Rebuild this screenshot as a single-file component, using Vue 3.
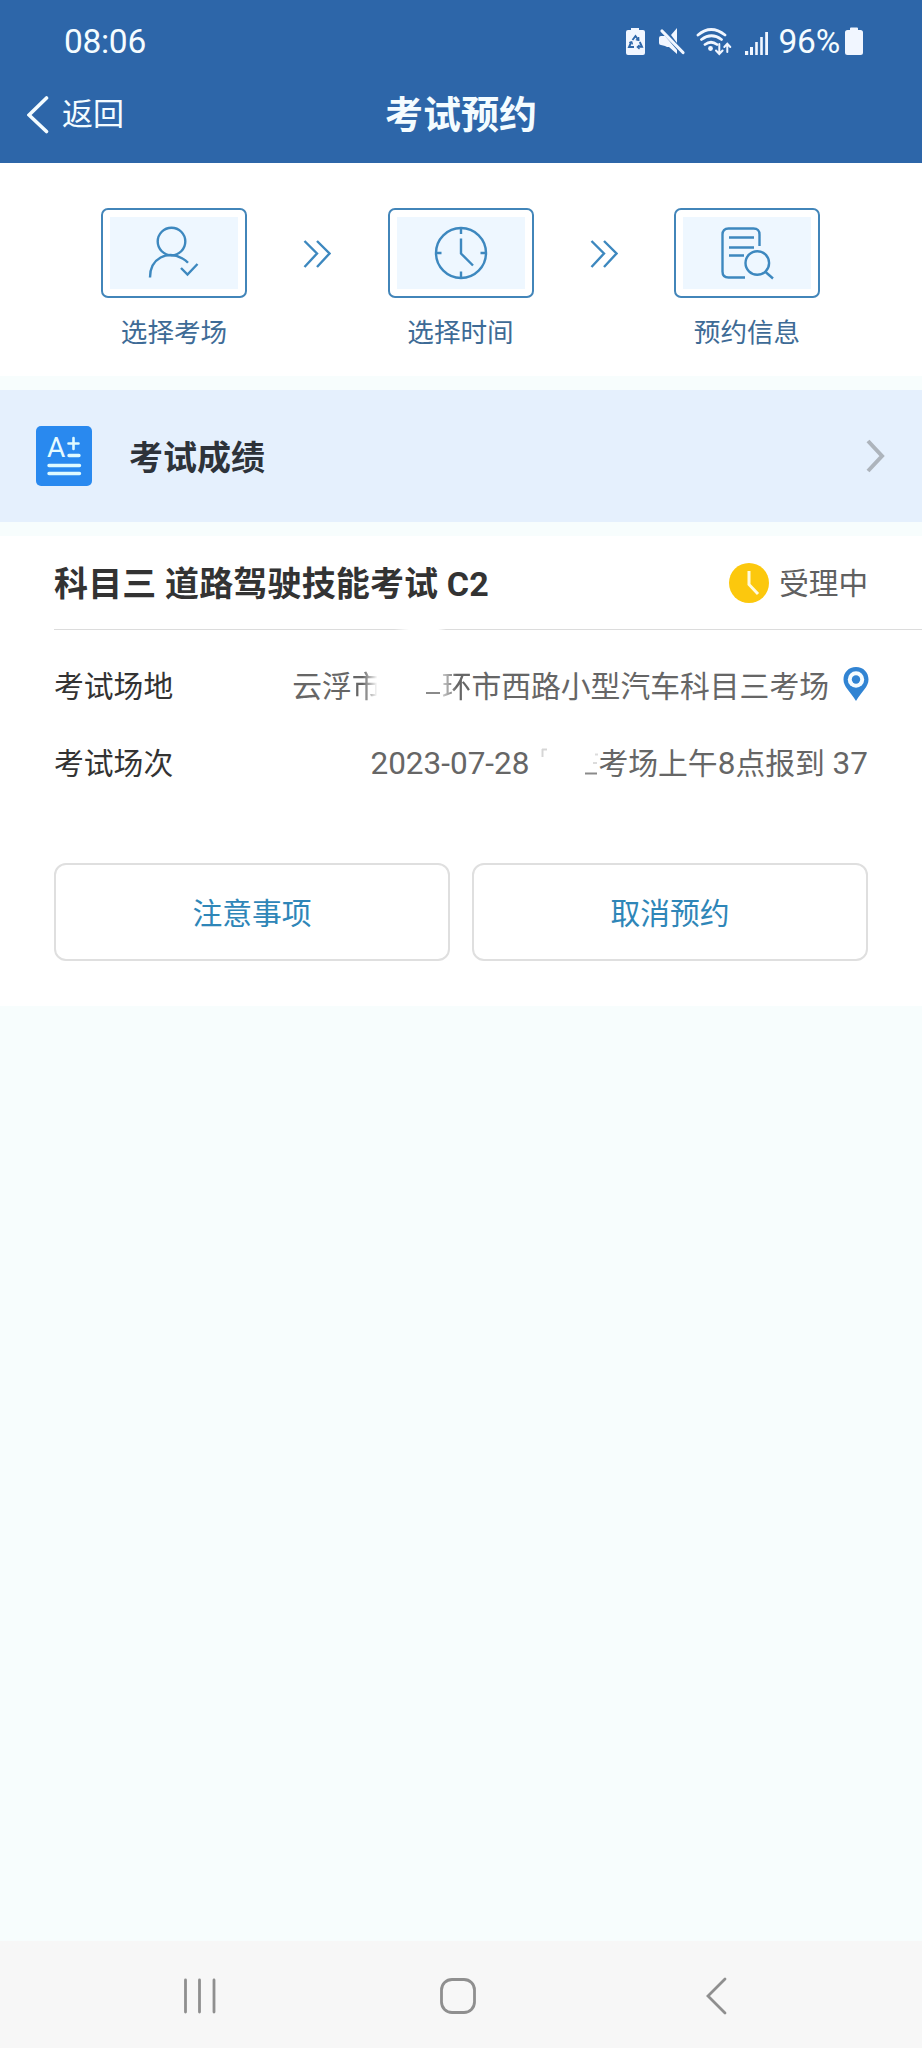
<script setup>
const steps = [
  { id: 'place', label: '选择考场' },
  { id: 'time', label: '选择时间' },
  { id: 'info', label: '预约信息' },
]
const actions = ['注意事项', '取消预约']
</script>

<template>
  <div class="screen">
    <header class="top">
      <div class="status">
        <span class="clock">08:06</span>
        <svg class="tray" width="148" height="34" viewBox="624 24 148 34">
          <g fill="#f1f6ff">
            <path d="M631 30v-2h8v2h4a2 2 0 0 1 2 2v21a2 2 0 0 1-2 2h-15a2 2 0 0 1-2-2V32a2 2 0 0 1 2-2z" />
            <path d="M661 36h4l12 14v4l-8-7h-2l-2-1-4-1a2 2 0 0 1-2-2v-5a2 2 0 0 1 2-2zM671 35l6-7v15z" />
            <circle cx="710.500" cy="48.500" r="2.400" />
            <rect x="745" y="51" width="3.200" height="4" />
            <rect x="750" y="47" width="3" height="8" />
            <rect x="755.200" y="42" width="2.600" height="13" />
            <rect x="760.200" y="37" width="2.600" height="18" />
            <rect x="765.200" y="32" width="2.800" height="23" />
          </g>
          <g fill="none" stroke="#f1f6ff" stroke-linecap="round">
            <path d="M662 31l21 21.500" stroke-width="3.200" />
            <path d="M698 35q13-11 27 0M701.500 39.500q10-7.500 20 0M705 44.500q6-4.500 12 0" stroke-width="2.800" />
            <path d="M719.300 44v9M716 50.500l3.300 3.500 3.300-3.500M727.300 52v-8M724.300 47l3-3.300 3 3.300" stroke-width="2" />
          </g>
          <g fill="none" stroke="#2d66a9" stroke-width="1.900">
            <path d="M632.500 40l3-4 3 4M639.800 42l2.200 4.800h-4M634 47h-5l2.300-5" />
            <path d="M638.600 37l.2 3.400-3-.8M639.500 45l-2.200 2 2.200 2M629.200 42.600l2.500-.8.800 2.600" stroke-width="1.300" />
          </g>
        </svg>
        <span class="percent">96%</span>
        <svg class="battery" width="18" height="28" viewBox="0 0 18 28">
          <path d="M5 3V1.500Q5 .5 6 .5h6q1 0 1 1V3h2.500Q18 3 18 5.500v20q0 2.500-2.500 2.500h-13Q0 28 0 25.500v-20Q0 3 2.500 3z" fill="#f1f6ff" />
        </svg>
      </div>
      <div class="navbar">
        <button class="back">
          <svg width="23" height="38" viewBox="0 0 23 38">
            <path d="M19.500 2L2 19l17.500 16.500" fill="none" stroke="#f4fcff" stroke-width="3.600" stroke-linecap="round" />
          </svg>
          <span>返回</span>
        </button>
        <h1>考试预约</h1>
      </div>
    </header>

    <section class="steps">
      <template v-for="(step, i) in steps" :key="step.id">
        <div class="step">
          <div class="step-frame">
            <div class="step-icon">
              <svg v-if="step.id === 'place'" width="54" height="54" viewBox="1.500 -1 54 54">
                <circle cx="26" cy="14.500" r="13.800" />
                <path d="M4.500 50.500C4.500 31 22 23 37 31.500Q40 33 42.500 35.800" />
                <path d="M35.500 41l6.500 6.500L52 37" />
              </svg>
              <svg v-else-if="step.id === 'time'" width="54" height="54" viewBox="0 -.5 54 54">
                <circle cx="27" cy="26.500" r="25" />
                <path d="M27 1.500v6M27 12v15l12 12M27 45v6M2 26.500h5.500M46.500 26.500H52" />
              </svg>
              <svg v-else width="54" height="54" viewBox="1 -1 54 54">
                <path d="M40.500 19V7.500Q40.500 1.500 34.500 1.500h-25Q3.500 1.500 3.500 7.500v37Q3.500 50.500 9.500 50.500H26M10 10.500h25M10 20.500h25M10 28.500h15" />
                <circle cx="38.300" cy="36" r="11.800" />
                <path d="M46 44.500L54 51.500" />
              </svg>
            </div>
          </div>
          <span class="step-label">{{ step.label }}</span>
        </div>
        <svg v-if="i < 2" class="arrows" width="28" height="30" viewBox="0 0 28 30">
          <path d="M1.500 2l12.500 12.500L1.500 28M14 2l12.500 12.500L14 28" />
        </svg>
      </template>
    </section>

    <section class="score">
      <span class="score-icon">
        <span class="grade">A</span>
        <svg width="56" height="60" viewBox="0 0 56 60">
          <path d="M32.500 17.500h10M37.500 12v11" stroke-width="2.600" />
          <path d="M33 29.500h10M13 39.500h30.500M13 47.500h30.500" stroke-width="3.400" />
        </svg>
      </span>
      <span class="score-title">考试成绩</span>
      <svg class="chevron" width="20" height="34" viewBox="0 0 20 34">
        <path d="M2 2l14 15L2 32" />
      </svg>
    </section>

    <section class="card">
      <div class="card-head">
        <h2>科目三 道路驾驶技能考试 C2</h2>
        <div class="state">
          <svg width="40" height="40" viewBox="0 0 40 40">
            <circle cx="20" cy="20" r="20" fill="#fcc80d" />
            <path d="M20 8v13.500l9 9.500" fill="none" stroke="#fffbe0" stroke-width="3" />
          </svg>
          <span>受理中</span>
        </div>
      </div>
      <div class="rule"></div>
      <div class="row">
        <span class="name">考试场地</span>
        <span class="value">云浮<span class="fade-out">市</span><span class="blank blank-place"><svg width="18" height="24" viewBox="0 0 18 24"><path d="M2 21h14" /></svg></span><span class="fade-in">环</span>市西路小型汽车科目三考场</span>
        <svg class="pin" width="26" height="34" viewBox="0 0 26 34">
          <path d="M13 0C5.500 0 .5 5.500.500 12.500.500 20 7 24 13 34 19 24 25.500 20 25.500 12.500 25.500 5.500 20.500 0 13 0z" fill="#3184d3" />
          <circle cx="13" cy="12.500" r="8.200" fill="#f5fcff" />
          <circle cx="13" cy="12.500" r="4.200" fill="#3184d3" />
        </svg>
      </div>
      <div class="row">
        <span class="name">考试场次</span>
        <span class="value"><span class="num">2023-07-28</span><span class="blank blank-time"><svg width="70" height="30" viewBox="0 0 70 30"><path d="M13 3.500h5M13.500 3v8" opacity=".35" /><path d="M56 27.500h12" /><path d="M64 17h4M66 8.500h3" opacity=".3" /></svg></span>考场上午<span class="num">8</span>点报到<span class="num">&nbsp;37</span></span>
      </div>
      <div class="actions">
        <button v-for="a in actions" :key="a">{{ a }}</button>
      </div>
    </section>

    <nav class="system">
      <svg width="34" height="36" viewBox="0 0 34 36"><path d="M2.500 2v32M16.500 2v32M31 2v32" /></svg>
      <svg class="home" width="36" height="36" viewBox="0 0 36 36"><rect x="1.500" y="1.500" width="33" height="33" rx="10.500" /></svg>
      <svg width="21" height="38" viewBox="0 0 21 38"><path d="M19 2L2 19l17 17" /></svg>
    </nav>
  </div>
</template>

<style>
body {
  margin: 0;
}
</style>

<style scoped>
.screen {
  display: flex;
  flex-direction: column;
  width: 922px;
  height: 2048px;
  overflow: hidden;
  background: #f7fdfd;
  font-family: Roboto, "Noto Sans CJK SC", sans-serif;
}
svg {
  display: block;
  flex: none;
}
button {
  font: inherit;
  padding: 0;
  background: none;
}
.top {
  height: 163px;
  background: #2d66a9;
  color: #f4fcff;
}
.status {
  display: flex;
  align-items: center;
  height: 82px;
  padding: 0 59px 0 64px;
  font-size: 33.500px;
}
.clock {
  letter-spacing: -0.300px;
}
.tray {
  margin-left: auto;
}
.percent {
  margin: 0 5px 0 6px;
  letter-spacing: -0.200px;
}
.navbar {
  display: grid;
  grid-template-columns: 1fr auto 1fr;
  align-items: center;
  height: 66px;
  padding: 0 27px;
}
.back {
  display: flex;
  align-items: center;
  gap: 12px;
  border: 0;
  color: inherit;
  font-size: 31px;
  line-height: 38px;
}
.back span {
  padding-bottom: 1px;
}
h1 {
  margin: 0;
  font-size: 38px;
  line-height: 50px;
  font-weight: 700;
}
.steps {
  display: flex;
  align-items: flex-start;
  box-sizing: border-box;
  height: 213px;
  padding: 45px 102px 0 101px;
  background: #fff;
}
.step {
  display: flex;
  flex-direction: column;
  align-items: center;
  width: 146px;
}
.step-frame {
  box-sizing: border-box;
  width: 146px;
  height: 90px;
  padding: 7px;
  border: 2px solid #4285b9;
  border-radius: 7px;
  background: #fff;
}
.step-icon {
  display: flex;
  align-items: center;
  justify-content: center;
  height: 72px;
  background: #eef7ff;
}
.step-icon svg,
.arrows {
  fill: none;
  stroke: #3d88bf;
  stroke-width: 2.400px;
}
.step-label {
  margin-top: 15px;
  font-size: 26.600px;
  line-height: 40px;
  color: #3e6b96;
}
.arrows {
  margin: 31px auto 0;
}
.score {
  display: flex;
  align-items: center;
  height: 132px;
  margin-top: 14px;
  padding: 0 36px;
  background: #e5f0fd;
}
.score-icon {
  position: relative;
  width: 56px;
  height: 60px;
  border-radius: 5px;
  background: #2989ef;
}
.score-icon svg {
  fill: none;
  stroke: #dffaff;
  stroke-linecap: round;
}
.grade {
  position: absolute;
  left: 11px;
  top: 7px;
  font-size: 28px;
  line-height: 30px;
  color: #e6fbff;
}
.score-title {
  margin-left: 37px;
  padding-bottom: 1px;
  font-size: 34px;
  font-weight: 700;
  color: #2e333a;
}
.chevron {
  margin-left: auto;
  fill: none;
  stroke: #adb4bc;
  stroke-width: 4px;
}
.card {
  box-sizing: border-box;
  height: 470px;
  margin-top: 14px;
  background: #fff;
}
.card-head {
  display: flex;
  align-items: center;
  justify-content: space-between;
  height: 93px;
  padding: 0 54px;
}
h2 {
  margin: 0;
  padding-top: 3px;
  font-size: 34px;
  line-height: 50px;
  letter-spacing: 0.150px;
  font-weight: 700;
  color: #333;
}
.state {
  display: flex;
  align-items: center;
  gap: 10px;
  font-size: 29.600px;
  line-height: 40px;
  color: #606060;
}
.state span {
  padding-top: 2px;
}
.rule {
  height: 1px;
  margin-left: 54px;
  background: linear-gradient(90deg, #dcdcdc 340px, #fff 355px, #fff 384px, #dcdcdc 392px);
}
.row {
  display: flex;
  align-items: center;
  box-sizing: border-box;
  height: 77px;
  padding: 0 54px 5px;
}
.rule + .row {
  margin-top: 18px;
}
.name {
  font-size: 29.800px;
  color: #333;
}
.value {
  display: flex;
  align-items: center;
  margin-left: auto;
  font-size: 29.800px;
  color: #666;
  white-space: pre;
}
.num {
  padding-top: 4px;
  font-size: 31.500px;
}
.blank svg {
  fill: none;
  stroke: #8a8a8a;
  stroke-width: 2px;
}
.blank-place {
  display: flex;
  justify-content: flex-end;
  width: 60px;
}
.blank-time {
  width: 69px;
}
.fade-out {
  mask-image: linear-gradient(90deg, #000 35%, transparent 85%);
}
.fade-in {
  mask-image: linear-gradient(90deg, rgba(0, 0, 0, 0.3), #000 50%);
}
.pin {
  margin-left: 14px;
  margin-right: -1px;
}
.actions {
  display: grid;
  grid-template-columns: 1fr 1fr;
  gap: 22px;
  margin: 61px 54px 0;
}
.actions button {
  height: 98px;
  padding-bottom: 3px;
  border: 2px solid #dfdfdf;
  border-radius: 12px;
  font-size: 29.800px;
  color: #2e86b8;
}
.system {
  display: flex;
  align-items: center;
  justify-content: space-between;
  box-sizing: border-box;
  height: 107px;
  margin-top: auto;
  padding: 3px 195px 0 183px;
  background: #f7f7f7;
}
.home {
  margin-right: 8px;
}
.system svg {
  fill: none;
  stroke: #8f8f8f;
  stroke-width: 2.800px;
  stroke-linecap: round;
}
</style>
